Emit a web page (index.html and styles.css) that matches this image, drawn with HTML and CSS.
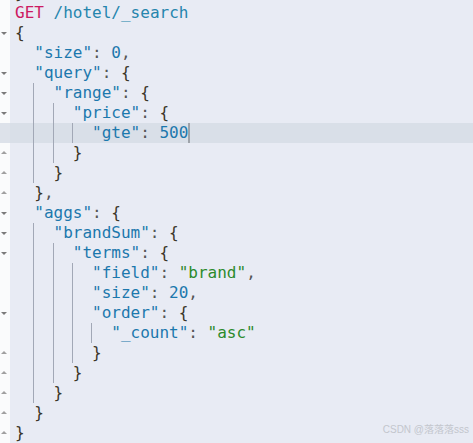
FILE: index.html
```html
<!DOCTYPE html>
<html>
<head>
<meta charset="utf-8">
<link rel="stylesheet" href="styles.css">
</head>
<body>
<div class="editor">
  <div class="lines">
    <div class="line"><div class="gut"></div><div class="code"><span class="p">}</span></div></div>
    <div class="line"><div class="gut"></div><div class="code"><span class="m">GET</span> <span class="u">/hotel/_search</span></div></div>
    <div class="line"><div class="gut"><i class="fold down"></i></div><div class="code"><span class="p">{</span></div></div>
    <div class="line"><div class="gut"></div><div class="code"><span class="ind"></span><span class="k">"size"</span><span class="c">: </span><span class="n">0</span><span class="c">,</span></div></div>
    <div class="line"><div class="gut"><i class="fold down"></i></div><div class="code"><span class="ind"></span><span class="k">"query"</span><span class="c">: </span><span class="p">{</span></div></div>
    <div class="line"><div class="gut"><i class="fold down"></i></div><div class="code"><span class="ind g"></span><span class="ind"></span><span class="k">"range"</span><span class="c">: </span><span class="p">{</span></div></div>
    <div class="line"><div class="gut"><i class="fold down"></i></div><div class="code"><span class="ind g"></span><span class="ind g"></span><span class="ind"></span><span class="k">"price"</span><span class="c">: </span><span class="p">{</span></div></div>
    <div class="line active"><div class="gut"></div><div class="code"><span class="ind g"></span><span class="ind g"></span><span class="ind g"></span><span class="ind"></span><span class="k">"gte"</span><span class="c">: </span><span class="n">500</span><span class="cursor"></span></div></div>
    <div class="line"><div class="gut"><i class="fold up"></i></div><div class="code"><span class="ind g"></span><span class="ind g"></span><span class="ind"></span><span class="p">}</span></div></div>
    <div class="line"><div class="gut"><i class="fold up"></i></div><div class="code"><span class="ind g"></span><span class="ind"></span><span class="p">}</span></div></div>
    <div class="line"><div class="gut"><i class="fold up"></i></div><div class="code"><span class="ind"></span><span class="p">}</span><span class="c">,</span></div></div>
    <div class="line"><div class="gut"><i class="fold down"></i></div><div class="code"><span class="ind"></span><span class="k">"aggs"</span><span class="c">: </span><span class="p">{</span></div></div>
    <div class="line"><div class="gut"><i class="fold down"></i></div><div class="code"><span class="ind g"></span><span class="ind"></span><span class="k">"brandSum"</span><span class="c">: </span><span class="p">{</span></div></div>
    <div class="line"><div class="gut"><i class="fold down"></i></div><div class="code"><span class="ind g"></span><span class="ind g"></span><span class="ind"></span><span class="k">"terms"</span><span class="c">: </span><span class="p">{</span></div></div>
    <div class="line"><div class="gut"></div><div class="code"><span class="ind g"></span><span class="ind g"></span><span class="ind g"></span><span class="ind"></span><span class="k">"field"</span><span class="c">: </span><span class="s">"brand"</span><span class="c">,</span></div></div>
    <div class="line"><div class="gut"></div><div class="code"><span class="ind g"></span><span class="ind g"></span><span class="ind g"></span><span class="ind"></span><span class="k">"size"</span><span class="c">: </span><span class="n">20</span><span class="c">,</span></div></div>
    <div class="line"><div class="gut"><i class="fold down"></i></div><div class="code"><span class="ind g"></span><span class="ind g"></span><span class="ind g"></span><span class="ind"></span><span class="k">"order"</span><span class="c">: </span><span class="p">{</span></div></div>
    <div class="line"><div class="gut"></div><div class="code"><span class="ind g"></span><span class="ind g"></span><span class="ind g"></span><span class="ind g"></span><span class="ind"></span><span class="k">"_count"</span><span class="c">: </span><span class="s">"asc"</span></div></div>
    <div class="line"><div class="gut"><i class="fold up"></i></div><div class="code"><span class="ind g"></span><span class="ind g"></span><span class="ind g"></span><span class="ind"></span><span class="p">}</span></div></div>
    <div class="line"><div class="gut"><i class="fold up"></i></div><div class="code"><span class="ind g"></span><span class="ind g"></span><span class="ind"></span><span class="p">}</span></div></div>
    <div class="line"><div class="gut"><i class="fold up"></i></div><div class="code"><span class="ind g"></span><span class="ind"></span><span class="p">}</span></div></div>
    <div class="line"><div class="gut"><i class="fold up"></i></div><div class="code"><span class="ind"></span><span class="p">}</span></div></div>
    <div class="line"><div class="gut"><i class="fold up"></i></div><div class="code"><span class="p">}</span></div></div>
  </div>
  <div class="watermark">CSDN @落落落sss</div>
</div>
</body>
</html>
```
FILE: styles.css
```css
html, body {
  margin: 0;
  padding: 0;
  background: #e8ebf4;
}
.editor {
  position: relative;
  width: 473px;
  height: 443px;
  overflow: hidden;
  background: #e8ebf4;
}
.lines {
  margin-top: -17px;
}
.line {
  display: flex;
  height: 20px;
}
.gut {
  width: 10px;
  flex: none;
  background: #fafbfc;
  position: relative;
}
.code {
  flex: 1;
  padding-left: 5px;
  font-family: "DejaVu Sans Mono", monospace;
  font-size: 16px;
  line-height: 20px;
  white-space: pre;
  color: #333;
}
.line.active .gut { background: #dde2ea; }
.line.active .code { background: #d9dfe8; }
.ind {
  display: inline-block;
  width: 19.26px;
  height: 20px;
  vertical-align: top;
}
.ind.g {
  background: linear-gradient(#a2a8b6, #a2a8b6) right top / 1px 100% no-repeat;
}
.m { color: #cc1a62; }
.u { color: #2585ad; }
.k { color: #1c78ad; }
.n { color: #1c78ad; }
.s { color: #2c8a2c; }
.p { color: #3a3528; }
.c { color: #555; }
.cursor {
  display: inline-block;
  width: 2px;
  height: 20px;
  vertical-align: top;
  background: #9ea3aa;
}
.fold {
  position: absolute;
  left: 1px;
  top: 9px;
  width: 0;
  height: 0;
  border-left: 3px solid transparent;
  border-right: 3px solid transparent;
}
.fold.down {
  border-top: 3px solid #7a7a7a;
}
.fold.up {
  top: 8px;
  border-bottom: 3px solid #a0a0a0;
}
.watermark {
  position: absolute;
  right: 4px;
  bottom: 7px;
  font-family: "Liberation Sans", "Noto Sans CJK SC", sans-serif;
  font-size: 10px;
  color: #c3c6cd;
}
```
